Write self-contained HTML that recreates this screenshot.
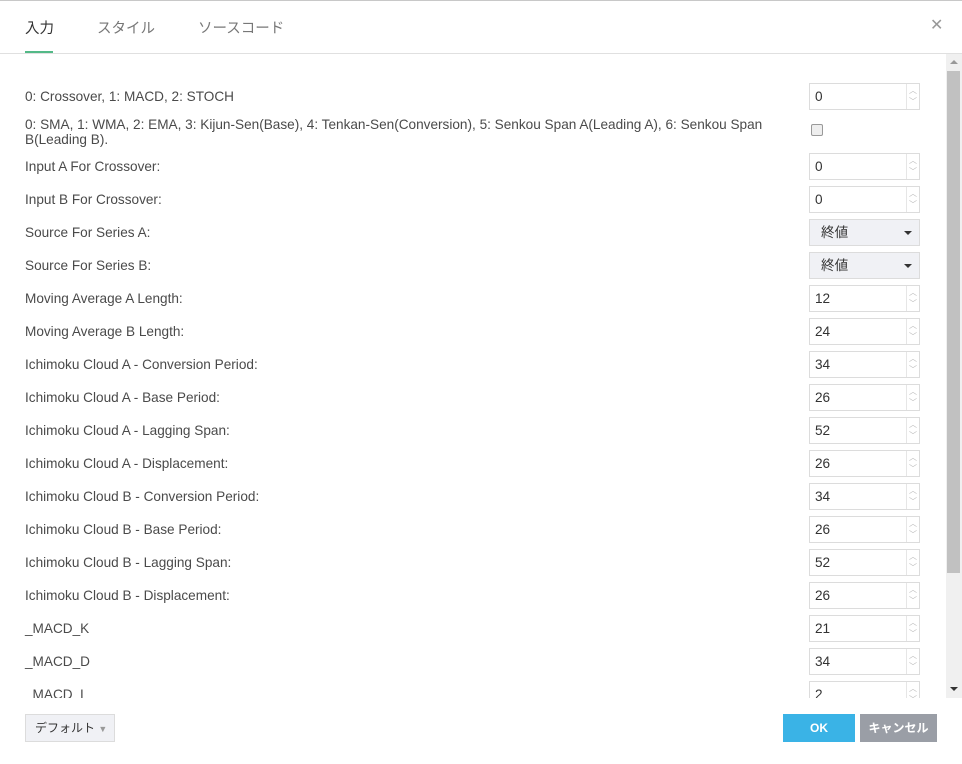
<!DOCTYPE html>
<html><head><meta charset="utf-8"><style>
*{box-sizing:border-box;margin:0;padding:0}
body{width:962px;height:764px;background:#fff;font-family:"Liberation Sans","Noto Sans CJK JP",sans-serif;color:#4a4a4a;font-size:13.6px;position:relative;overflow:hidden;border-top:1px solid #c8c8c8}
.tab{position:absolute;top:16px;font-size:14.5px;color:#777}
.hdr{position:absolute;left:0;right:0;top:52px;border-top:1px solid #e0e0e0}
.ul{position:absolute;left:25px;top:50px;width:28px;height:2px;background:#53b987}
.close{position:absolute;left:930px;top:14px;font-size:16px;color:#999}
.content{position:absolute;left:0;top:53px;width:946px;height:644px;overflow:hidden}
.lbl{position:absolute;left:25px;line-height:15px;margin-top:1px}
.inp{position:absolute;left:809px;width:111px;height:27px;border:1px solid #dcdcdc;background:#fff;padding-left:5px;line-height:25px;color:#333}
.inp:after{content:"";position:absolute;right:12px;top:0;bottom:0;border-left:1px solid #e6e6e6}
.inp i{position:absolute;right:2px;font-style:normal;font-size:8px;color:#bbb;line-height:8px}
.sel{position:absolute;left:809px;width:111px;height:27px;border:1px solid #dcdcdc;background:#f0f1f5;padding-left:11px;line-height:25px;color:#333}
.sel:after{content:"";position:absolute;right:7px;top:11px;border:4px solid transparent;border-top:4px solid #333}
.cb{position:absolute;left:811px;width:12px;height:12px;border:1px solid #999;border-radius:2px;background:#eee}
.sb{position:absolute;left:946px;top:53px;width:16px;height:644px;background:#f0f0f0}
.thumb{position:absolute;left:947px;top:70px;width:13px;height:502px;background:#c1c1c1}
.btn{position:absolute;top:713px;height:28px;line-height:28px;color:#fff;font-weight:bold;font-size:12px;text-align:center}
</style></head><body>
<div class="tab" style="left:25px;color:#333">入力</div>
<div class="tab" style="left:97px">スタイル</div>
<div class="tab" style="left:198px">ソースコード</div>
<div class="close">✕</div>
<div class="hdr"></div><div class="ul"></div>
<div class="content">
<div class="lbl" style="top:34px">0: Crossover, 1: MACD, 2: STOCH</div>
<div class="inp" style="top:29px">0<i style="top:3px">︿</i><i style="top:14px">﹀</i></div>
<div class="lbl" style="top:62px;width:760px">0: SMA, 1: WMA, 2: EMA, 3: Kijun-Sen(Base), 4: Tenkan-Sen(Conversion), 5: Senkou Span A(Leading A), 6: Senkou Span B(Leading B).</div>
<div class="cb" style="top:70px"></div>
<div class="lbl" style="top:104px">Input A For Crossover:</div><div class="inp" style="top:99px">0<i style="top:3px">︿</i><i style="top:14px">﹀</i></div>
<div class="lbl" style="top:137px">Input B For Crossover:</div><div class="inp" style="top:132px">0<i style="top:3px">︿</i><i style="top:14px">﹀</i></div>
<div class="lbl" style="top:170px">Source For Series A:</div><div class="sel" style="top:165px">終値</div>
<div class="lbl" style="top:203px">Source For Series B:</div><div class="sel" style="top:198px">終値</div>
<div class="lbl" style="top:236px">Moving Average A Length:</div><div class="inp" style="top:231px">12<i style="top:3px">︿</i><i style="top:14px">﹀</i></div>
<div class="lbl" style="top:269px">Moving Average B Length:</div><div class="inp" style="top:264px">24<i style="top:3px">︿</i><i style="top:14px">﹀</i></div>
<div class="lbl" style="top:302px">Ichimoku Cloud A - Conversion Period:</div><div class="inp" style="top:297px">34<i style="top:3px">︿</i><i style="top:14px">﹀</i></div>
<div class="lbl" style="top:335px">Ichimoku Cloud A - Base Period:</div><div class="inp" style="top:330px">26<i style="top:3px">︿</i><i style="top:14px">﹀</i></div>
<div class="lbl" style="top:368px">Ichimoku Cloud A - Lagging Span:</div><div class="inp" style="top:363px">52<i style="top:3px">︿</i><i style="top:14px">﹀</i></div>
<div class="lbl" style="top:401px">Ichimoku Cloud A - Displacement:</div><div class="inp" style="top:396px">26<i style="top:3px">︿</i><i style="top:14px">﹀</i></div>
<div class="lbl" style="top:434px">Ichimoku Cloud B - Conversion Period:</div><div class="inp" style="top:429px">34<i style="top:3px">︿</i><i style="top:14px">﹀</i></div>
<div class="lbl" style="top:467px">Ichimoku Cloud B - Base Period:</div><div class="inp" style="top:462px">26<i style="top:3px">︿</i><i style="top:14px">﹀</i></div>
<div class="lbl" style="top:500px">Ichimoku Cloud B - Lagging Span:</div><div class="inp" style="top:495px">52<i style="top:3px">︿</i><i style="top:14px">﹀</i></div>
<div class="lbl" style="top:533px">Ichimoku Cloud B - Displacement:</div><div class="inp" style="top:528px">26<i style="top:3px">︿</i><i style="top:14px">﹀</i></div>
<div class="lbl" style="top:566px">_MACD_K</div><div class="inp" style="top:561px">21<i style="top:3px">︿</i><i style="top:14px">﹀</i></div>
<div class="lbl" style="top:599px">_MACD_D</div><div class="inp" style="top:594px">34<i style="top:3px">︿</i><i style="top:14px">﹀</i></div>
<div class="lbl" style="top:632px">_MACD_L</div><div class="inp" style="top:627px">2<i style="top:3px">︿</i><i style="top:14px">﹀</i></div>
</div>
<div class="sb"></div><div class="thumb"></div>
<div style="position:absolute;left:950px;top:59px;border:4px solid transparent;border-bottom:4px solid #999;border-top:0"></div>
<div style="position:absolute;left:950px;top:686px;border:4px solid transparent;border-top:4px solid #333;border-bottom:0"></div>
<div style="position:absolute;left:25px;top:713px;width:90px;height:28px;border:1px solid #dcdcdc;background:#f0f1f5;line-height:26px;padding-left:9px;font-size:12px;color:#333">デフォルト <span style="color:#999;font-size:9px">▼</span></div>
<div class="btn" style="left:783px;width:72px;background:#3ab3e6">OK</div>
<div class="btn" style="left:860px;width:77px;background:#9a9ea6">キャンセル</div>
</body></html>
